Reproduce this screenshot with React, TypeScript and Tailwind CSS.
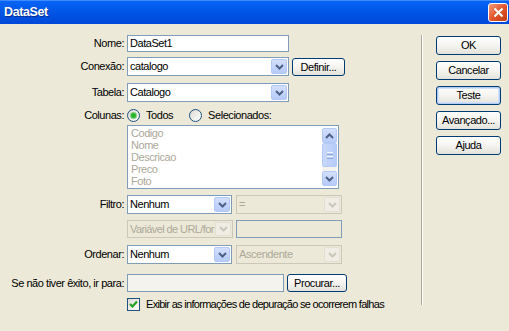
import React from "react";

const Chevron = ({ color = "#4D6185" }: { color?: string }) => (
  <svg width="9" height="6" viewBox="0 0 9 6">
    <path d="M1 1 L4.5 4.5 L8 1" fill="none" stroke={color} strokeWidth="2" />
  </svg>
);

const ChevronUp = () => (
  <svg width="9" height="6" viewBox="0 0 9 6">
    <path d="M1 5 L4.5 1.5 L8 5" fill="none" stroke="#4D6185" strokeWidth="2" />
  </svg>
);

function DropBtn({ disabled }: { disabled?: boolean }) {
  return disabled ? (
    <div className="flex w-[16px] shrink-0 items-center justify-center my-[1px] mr-[1px] rounded-[1px] border border-[#E2DFD3] bg-[#F0EEE4]">
      <Chevron color="#C9C7BA" />
    </div>
  ) : (
    <div className="flex w-[16px] shrink-0 items-center justify-center my-[1px] mr-[1px] rounded-[2px] border border-[#B4C8F6] bg-gradient-to-b from-[#D3DFFC] to-[#B6CBF8]">
      <Chevron />
    </div>
  );
}

function Select({
  cls,
  text,
  disabled,
}: {
  cls: string;
  text: string;
  disabled?: boolean;
}) {
  return (
    <div
      className={
        "flex border " +
        cls +
        (disabled
          ? " border-[#CBC8B9] bg-[#ECE9D8] text-[#ACA899]"
          : " border-[#7F9DB9] bg-white text-black")
      }
    >
      <div className="flex min-w-0 flex-1 items-center overflow-hidden whitespace-nowrap pl-[2px]">
        {text}
      </div>
      <DropBtn disabled={disabled} />
    </div>
  );
}

function XpButton({
  cls,
  label,
  focus,
}: {
  cls: string;
  label: string;
  focus?: boolean;
}) {
  return (
    <div
      className={
        "flex items-center justify-center whitespace-nowrap rounded-[3px] border border-[#003C74] bg-gradient-to-b from-[#FFFFFF] via-[#F5F4F0] to-[#E3E2DA] text-black " +
        cls +
        (focus
          ? " shadow-[inset_0_0_0_1px_#B3CBF5,inset_0_0_0_2px_#D1E0FB]"
          : "")
      }
    >
      {label}
    </div>
  );
}

function Label({ text }: { text: string }) {
  return (
    <div className="flex w-[125px] shrink-0 items-center justify-end whitespace-nowrap pr-[1px]">
      {text}
    </div>
  );
}

function Radio({ checked }: { checked?: boolean }) {
  return (
    <div className="flex h-[13px] w-[13px] items-center justify-center rounded-full border border-[#1C5180] bg-gradient-to-br from-[#DCDBD3] to-white">
      {checked && (
        <div className="h-[5px] w-[5px] rounded-full bg-[#2FB42F] shadow-[0_0_0_1px_#7FD07F]" />
      )}
    </div>
  );
}

export default function App() {
  return (
    <div className="h-[331px] w-[509px] overflow-hidden bg-[#ECE9D8] font-['Liberation_Sans',Arial,sans-serif] text-[11px] tracking-[-0.45px] text-black">
      {/* Title bar */}
      <div className="relative flex h-[24px] items-center bg-gradient-to-b from-[#0A66F8] via-[#0055E5] to-[#0048D8] pl-[4px] shadow-[inset_0_1px_0_#3D8BFF]">
        <span className="text-[12.5px] font-bold tracking-[-0.4px] text-white [text-shadow:1px_1px_0_#0A2C8C]">
          DataSet
        </span>
        <div className="absolute left-[488px] top-[3px] flex h-[19px] w-[20px] items-center justify-center rounded-[3px] border border-white bg-gradient-to-br from-[#F09A7C] via-[#E2562C] to-[#C23C14]">
          <svg width="11" height="11" viewBox="0 0 11 11">
            <path d="M1.5 1.5 L9.5 9.5 M9.5 1.5 L1.5 9.5" stroke="white" strokeWidth="2" />
          </svg>
        </div>
      </div>

      {/* Body */}
      <div className="flex">
        <div className="flex w-[421px] shrink-0 flex-col pt-[11px]">
          {/* Nome */}
          <div className="flex h-[17px]">
            <Label text="Nome:" />
            <div className="ml-[2px] flex w-[162px] items-center border border-[#7F9DB9] bg-white pl-[2px]">
              DataSet1
            </div>
          </div>
          {/* Conexão */}
          <div className="mt-[5px] flex h-[19px]">
            <Label text="Conexão:" />
            <Select cls="ml-[2px] w-[162px]" text="catalogo" />
            <XpButton cls="ml-[3px] mt-[1px] h-[18px] w-[53px]" label="Definir..." />
          </div>
          {/* Tabela */}
          <div className="mt-[7px] flex h-[19px]">
            <Label text="Tabela:" />
            <Select cls="ml-[2px] w-[162px]" text="Catalogo" />
          </div>
          {/* Colunas */}
          <div className="mt-[5px] flex h-[16px]">
            <Label text="Colunas:" />
            <div className="ml-[2px] flex items-center">
              <Radio checked />
              <span className="ml-[6px]">Todos</span>
              <div className="ml-[16px]">
                <Radio />
              </div>
              <span className="ml-[6px]">Selecionados:</span>
            </div>
          </div>
          {/* Listbox */}
          <div className="mt-[2px] flex">
            <div className="w-[127px] shrink-0" />
            <div className="flex h-[64px] w-[212px] border border-[#7F9DB9] bg-white">
              <div className="flex-1 pl-[3px] pt-[1px] leading-[12px] text-[#ACA899]">
                <div>Codigo</div>
                <div>Nome</div>
                <div>Descricao</div>
                <div>Preco</div>
                <div>Foto</div>
              </div>
              <div className="flex w-[16px] flex-col py-[2px] pr-[1px]">
                <div className="flex h-[15px] items-center justify-center rounded-[2px] border border-[#B4C8F6] bg-gradient-to-b from-[#D3DFFC] to-[#B6CBF8]">
                  <ChevronUp />
                </div>
                <div className="flex h-[24px] flex-col items-center justify-center gap-[1px] rounded-[2px] border border-[#B4C8F6] bg-gradient-to-r from-[#C9D8FC] to-[#B6CBF8]">
                  <div className="h-[1px] w-[6px] bg-[#EEF3FE]" />
                  <div className="h-[1px] w-[6px] bg-[#8CA6DE]" />
                  <div className="h-[1px] w-[6px] bg-[#EEF3FE]" />
                  <div className="h-[1px] w-[6px] bg-[#8CA6DE]" />
                </div>
                <div className="flex-1 bg-[#F4F3EE]" />
                <div className="flex h-[15px] items-center justify-center rounded-[2px] border border-[#B4C8F6] bg-gradient-to-b from-[#D3DFFC] to-[#B6CBF8]">
                  <Chevron />
                </div>
              </div>
            </div>
          </div>
          {/* Filtro */}
          <div className="mt-[6px] flex h-[19px]">
            <Label text="Filtro:" />
            <Select cls="ml-[2px] w-[105px]" text="Nenhum" />
            <Select cls="ml-[4px] w-[106px]" text="=" disabled />
          </div>
          {/* URL */}
          <div className="mt-[6px] flex h-[18px]">
            <div className="w-[127px] shrink-0" />
            <Select cls="w-[106px] tracking-[-0.6px]" text="Variável de URL/for" disabled />
            <div className="ml-[3px] w-[106px] border border-[#7F9DB9] bg-[#ECE9D8]" />
          </div>
          {/* Ordenar */}
          <div className="mt-[7px] flex h-[19px]">
            <Label text="Ordenar:" />
            <Select cls="ml-[2px] w-[105px]" text="Nenhum" />
            <Select cls="ml-[4px] w-[106px]" text="Ascendente" disabled />
          </div>
          {/* Se não */}
          <div className="mt-[10px] flex h-[18px]">
            <Label text="Se não tiver êxito, ir para:" />
            <div className="ml-[2px] w-[157px] border border-[#7F9DB9] bg-[#F4F3EE]" />
            <XpButton cls="ml-[3px] w-[60px]" label="Procurar..." />
          </div>
          {/* Checkbox */}
          <div className="mt-[5px] flex h-[14px] items-center">
            <div className="w-[127px] shrink-0" />
            <div className="flex h-[13px] w-[13px] items-center justify-center border border-[#1C5180] bg-gradient-to-br from-[#DCDBD3] to-white">
              <svg width="9" height="9" viewBox="0 0 9 9">
                <path d="M1 4 L3.5 6.5 L8 1.5" fill="none" stroke="#21A121" strokeWidth="2.2" />
              </svg>
            </div>
            <span className="ml-[6px] whitespace-nowrap tracking-[-0.7px]">
              Exibir as informações de depuração se ocorrerem falhas
            </span>
          </div>
        </div>

        {/* Separator */}
        <div className="mt-[11px] flex h-[270px]">
          <div className="w-[1px] bg-[#ACA899]" />
          <div className="w-[1px] bg-white" />
        </div>

        {/* Buttons */}
        <div className="flex flex-col gap-[6px] pl-[13px] pt-[12px]">
          <XpButton cls="h-[19px] w-[65px]" label="OK" />
          <XpButton cls="h-[19px] w-[65px]" label="Cancelar" />
          <XpButton cls="h-[19px] w-[65px]" label="Teste" focus />
          <XpButton cls="h-[19px] w-[65px]" label="Avançado..." />
          <XpButton cls="h-[19px] w-[65px]" label="Ajuda" />
        </div>
      </div>
    </div>
  );
}
